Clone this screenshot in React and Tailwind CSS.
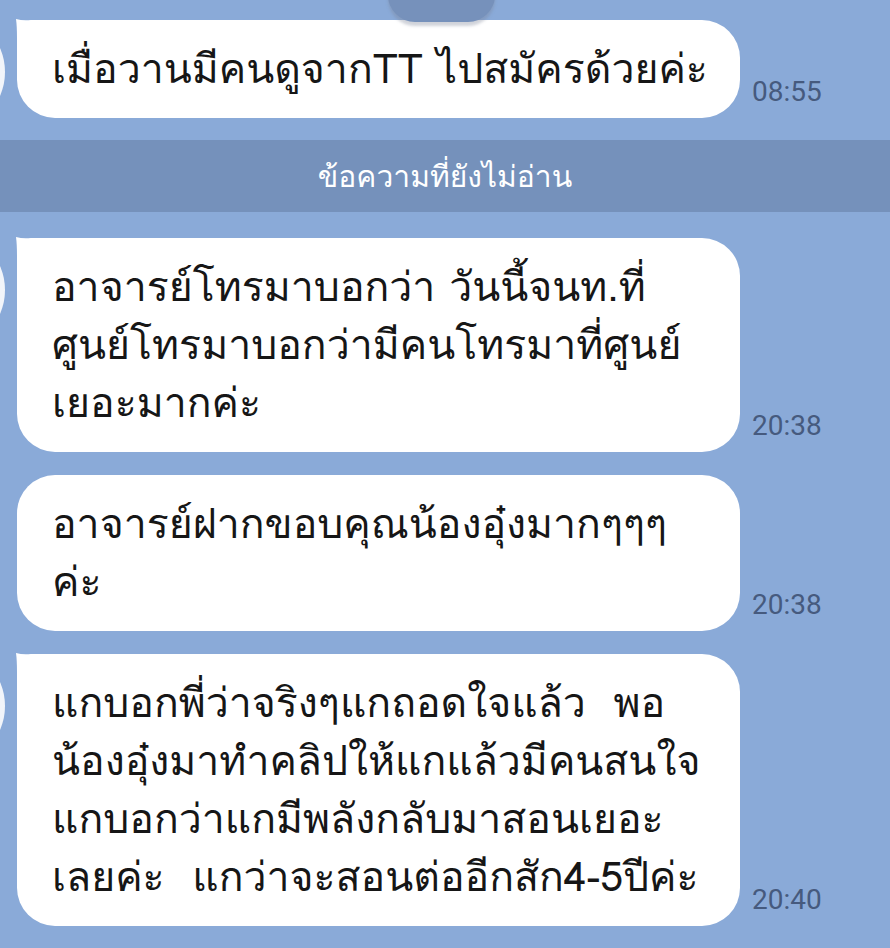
import React from "react";

function Tail() {
  return (
    <svg className="absolute left-[-3px] top-[-3px]" width="36" height="36" viewBox="-3 -3 36 36">
      <path d="M -1 -1 Q 6 1 14 0 L 33 0 L 33 33 L 0 33 L 0 18 Q 0 6 -1 -1 Z" fill="#ffffff" />
    </svg>
  );
}

function Message({ lines, time, tail }) {
  return (
    <div className="relative flex items-end pl-[17px]">
      {tail && (
        <div className="absolute left-[-115px] top-[-8px] h-[120px] w-[120px] rounded-full bg-[#f2f5fa]" />
      )}
      <div
        className={
          tail
            ? "relative w-[723px] rounded-[38px] rounded-tl-[18px] bg-white px-[35px] py-[20px] font-['Loma','DejaVu_Sans',sans-serif] text-[41px] leading-[58px] text-[#161616]"
            : "relative w-[723px] rounded-[38px] bg-white px-[35px] py-[20px] font-['Loma','DejaVu_Sans',sans-serif] text-[41px] leading-[58px] text-[#161616]"
        }
      >
        {tail && <Tail />}
        <div className="relative">
          {lines.map((l, i) => (
            <div key={i} className="whitespace-pre">
              {l}
            </div>
          ))}
        </div>
      </div>
      <div className="mb-[9px] ml-[12px] font-['Roboto',sans-serif] text-[28px] leading-[34px] text-[#465a7e]">
        {time}
      </div>
    </div>
  );
}

export default function App() {
  return (
    <div className="relative h-[948px] w-[890px] overflow-hidden bg-[#8aaad8]">
      <div className="flex flex-col pt-[20px]">
        <Message lines={["เมื่อวานมีคนดูจากTT ไปสมัครด้วยค่ะ"]} time="08:55" tail />
        <div className="mt-[22px] flex h-[72px] items-center justify-center bg-[#7591bb] font-['Loma','DejaVu_Sans',sans-serif] text-[30px] text-white">
          ข้อความที่ยังไม่อ่าน
        </div>
        <div className="mt-[26px] flex flex-col gap-[23px]">
          <Message
            lines={["อาจารย์โทรมาบอกว่า วันนี้จนท.ที่", "ศูนย์โทรมาบอกว่ามีคนโทรมาที่ศูนย์", "เยอะมากค่ะ"]}
            time="20:38"
            tail
          />
          <Message lines={["อาจารย์ฝากขอบคุณน้องอุ๋งมากๆๆๆ", "ค่ะ"]} time="20:38" />
          <Message
            lines={[
              "แกบอกพี่ว่าจริงๆแกถอดใจแล้ว  พอ",
              "น้องอุ๋งมาทำคลิปให้แกแล้วมีคนสนใจ",
              "แกบอกว่าแกมีพลังกลับมาสอนเยอะ",
              "เลยค่ะ  แกว่าจะสอนต่ออีกสัก4-5ปีค่ะ",
            ]}
            time="20:40"
            tail
          />
        </div>
      </div>
      <div className="absolute left-[388px] top-[-32px] flex h-[54px] w-[107px] items-end justify-center rounded-full bg-[#7691bb] pb-[18px] shadow-[0_4px_3px_rgba(120,130,150,0.35)]">
        <span className="font-['Loma','DejaVu_Sans',sans-serif] text-[22px] leading-[26px] text-white">วันนี้</span>
      </div>
    </div>
  );
}
